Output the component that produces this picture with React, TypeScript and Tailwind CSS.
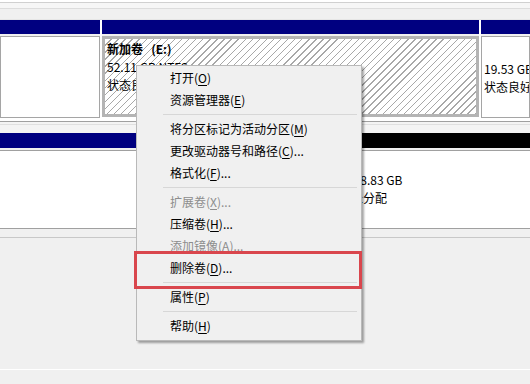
import React from "react";

type Item = { label: string; key: string; tail?: string; disabled?: boolean } | "sep";

const items: Item[] = [
  { label: "打开", key: "O" },
  { label: "资源管理器", key: "E" },
  "sep",
  { label: "将分区标记为活动分区", key: "M" },
  { label: "更改驱动器号和路径", key: "C", tail: "..." },
  { label: "格式化", key: "F", tail: "..." },
  "sep",
  { label: "扩展卷", key: "X", tail: "...", disabled: true },
  { label: "压缩卷", key: "H", tail: "..." },
  { label: "添加镜像", key: "A", tail: "...", disabled: true },
  { label: "删除卷", key: "D", tail: "..." },
  "sep",
  { label: "属性", key: "P" },
  "sep",
  { label: "帮助", key: "H" },
];

const hatch =
  "bg-[repeating-linear-gradient(135deg,#ffffff_0px,#ffffff_4px,#a8a8a8_4px,#a8a8a8_5px)]";

function ContextMenu() {
  return (
    <div className="absolute left-[136px] top-[65px] w-[226px] border border-[#b9b9b9] bg-[#f0f0f0] pt-[1px] pb-[3px] shadow-[2px_2px_2px_rgba(0,0,0,0.35)]">
      {items.map((it, i) =>
        it === "sep" ? (
          <div key={i} className="flex h-[7px] items-center pl-[26px] pr-[4px]">
            <div className="h-px w-full bg-[#d7d7d7]" />
          </div>
        ) : (
          <div
            key={i}
            className={`flex h-[22px] items-center pl-[33px] ${
              it.disabled ? "text-[#8d8d8d]" : "text-black"
            }`}
          >
            {it.label}(<u className="underline-offset-2">{it.key}</u>){it.tail}
          </div>
        ),
      )}
    </div>
  );
}

export default function App() {
  return (
    <div className="relative h-[384px] w-[530px] overflow-hidden bg-[#f0f0f0] font-['Noto_Sans_CJK_SC','Microsoft_YaHei',sans-serif] text-[12px] leading-[18px] text-black">
      {/* top strip */}
      <div className="h-[20px] border-b border-[#e6e6e6]">
        <div className="h-[2px] bg-white" />
        <div className="h-[6px] border-t border-[#d0d0d0] bg-[#f6f6f6]" />
        <div className="border-t border-[#dcdcdc]" />
      </div>

      {/* disk row 1 */}
      <div className="flex h-[101px] gap-[2px] bg-white">
        <div className="flex w-[100px] shrink-0 flex-col">
          <div className="h-[14px] bg-[#000080]" />
          <div className="h-[2px] bg-[#f0f0f0]" />
          <div className="h-[82px] border border-[#a5a5a5] bg-white" />
        </div>
        <div className="flex w-[377px] shrink-0 flex-col">
          <div className="h-[14px] bg-[#000080]" />
          <div className="h-[2px] bg-[#f0f0f0]" />
          <div className={`h-[81px] border-[3px] border-[#b4b4b4] px-[2px] pt-[1px] ${hatch}`}>
            <div className="font-bold">
              新加卷&nbsp;&nbsp;&nbsp;(E:)
            </div>
            <div>52.11 GB NTFS</div>
            <div>状态良好 (主分区)</div>
          </div>
        </div>
        <div className="flex min-w-0 flex-1 flex-col">
          <div className="h-[14px] bg-[#000080]" />
          <div className="h-[2px] bg-[#f0f0f0]" />
          <div className="h-[82px] overflow-hidden whitespace-nowrap border border-[#a5a5a5] bg-white px-[2px] pt-[23px]">
            <div>19.53 GB NTFS</div>
            <div>状态良好 (主分区)</div>
          </div>
        </div>
      </div>

      {/* divider */}
      <div className="h-[12px] border-t border-[#a0a0a0] bg-[#f4f4f4]">
        <div className="mt-[2px] border-t border-[#e0e0e0]" />
      </div>

      {/* disk row 2 */}
      <div className="flex h-[104px] gap-[2px]">
        <div className="flex w-[349px] shrink-0 flex-col">
          <div className="h-[15px] bg-[#000080]" />
          <div className="h-[3px] border-b border-[#a0a0a0] bg-[#f0f0f0]" />
          <div className="h-[78px] border-b border-[#a0a0a0] bg-white" />
        </div>
        <div className="flex min-w-0 flex-1 flex-col">
          <div className="h-[15px] bg-black" />
          <div className="h-[3px] border-b border-[#a0a0a0] bg-[#f0f0f0]" />
          <div className="h-[78px] whitespace-nowrap border-b border-[#a0a0a0] bg-white pt-[20px]">
            <div>&nbsp;48.83 GB</div>
            <div>未分配</div>
          </div>
        </div>
      </div>
      <div className="border-t border-[#c8c8c8]" />

      {/* empty lower area */}
      <div className="h-[132px] border-b border-white" />

      <ContextMenu />

      {/* annotation box */}
      <div className="absolute left-[134px] top-[251px] h-[38px] w-[228px] border-[3px] border-[#d9464d]" />
    </div>
  );
}
